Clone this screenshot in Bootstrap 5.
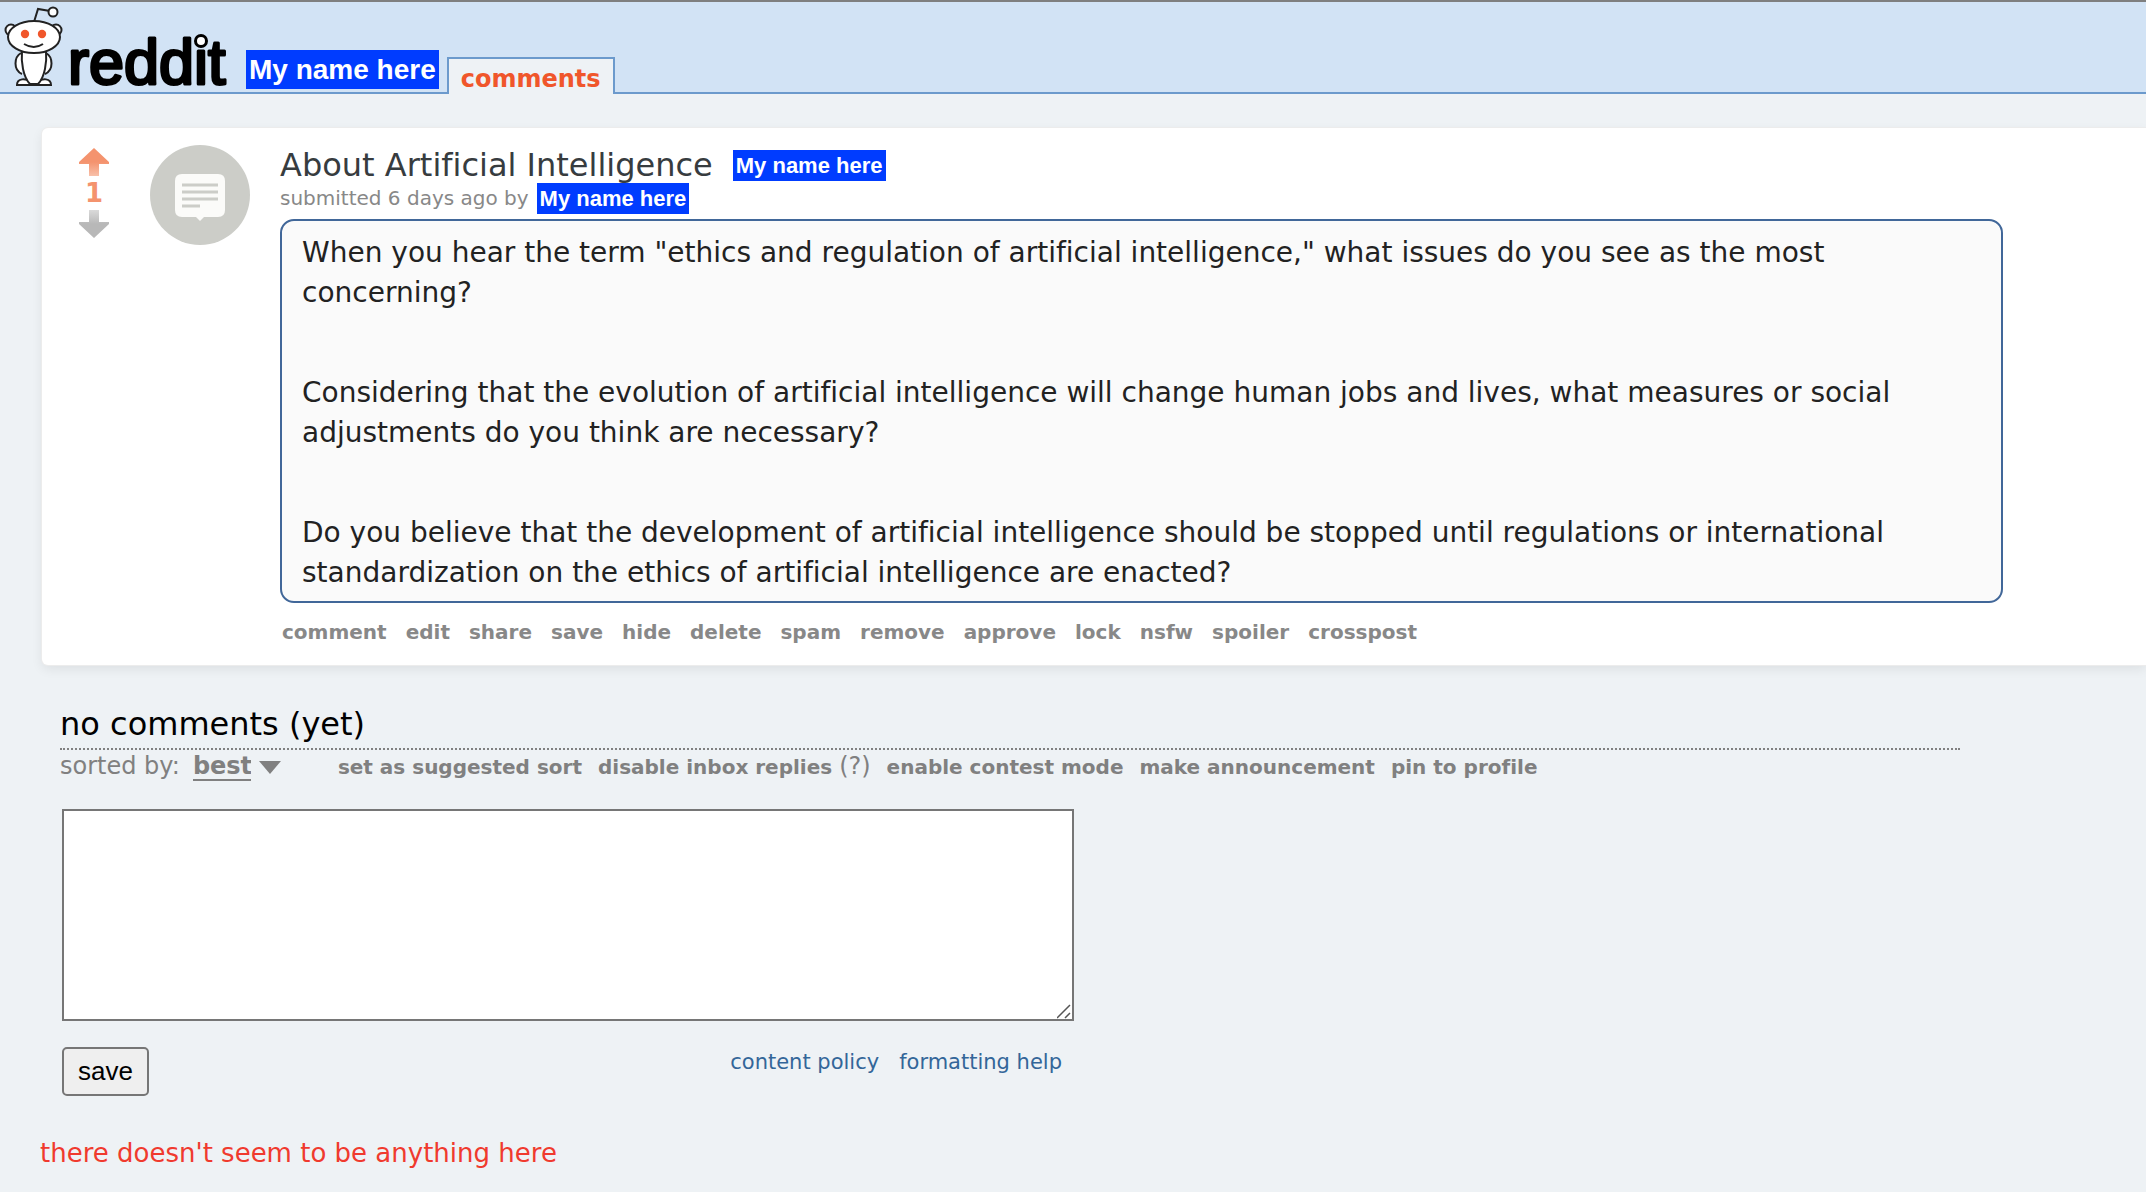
<!DOCTYPE html>
<html lang="en">
<head>
<meta charset="utf-8">
<meta name="viewport" content="width=device-width, initial-scale=1">
<title>About Artificial Intelligence</title>
<link href="https://cdn.jsdelivr.net/npm/bootstrap@5.3.0/dist/css/bootstrap.min.css" rel="stylesheet">
<style>
body{background:#eef2f5;font-family:Verdana,"DejaVu Sans",sans-serif;font-variant-ligatures:none;color:#000;overflow-x:hidden}
a{text-decoration:none}
.site-head{background:#d2e3f5;border-top:2px solid #7f7f7f;border-bottom:2px solid #6c9acc;height:94px;padding-left:4px}
.snoo{width:60px;height:84px}
.wordmark{width:166px;height:90px;margin-bottom:-10px}
.wordmark text{font:63px "Liberation Sans",sans-serif;stroke:#000;stroke-width:3px;stroke-linejoin:round}
.name-tag{background:#003cff;color:#fff;font:bold 22px/31px "Liberation Sans",Arial,sans-serif;padding:0 3px}
.name-lg{font-size:28px;line-height:39px;margin:0 8px 3px 16px}
.tab-on{background:#eef2f5;border:2px solid #6c9acc;border-bottom:0;margin-bottom:-2px;height:37px;padding:0 12px;font-weight:700;font-size:24px;line-height:40px;color:#f0562b}
.post-card{background:#fff;border-radius:6px 0 0 6px;box-shadow:0 0 0 1px #ececec,0 4px 12px rgba(0,0,0,.08);margin:34px 0 0 42px;padding:17px 143px 19px 36px}
.votes{width:32px;margin-right:40px;padding-top:3px}
.votes svg{width:32px;height:28px}
.votes button{line-height:0}
.score{font-weight:700;font-size:26px;line-height:34px;color:#f4936e}
.thumb{width:100px;height:100px;margin-right:30px}
.post-head{gap:20px;padding-top:2px}
.post-title{font-size:32px;line-height:36px;color:#373c3f}
.tagline{font-size:20px;line-height:30px;color:#888}
.post-body{background:#fafafa;border:2px solid #416799;border-radius:14px;padding:12px 20px 8px;margin:5px 0 15px;font-size:28px;line-height:40px;color:#222}
.post-body p{margin-bottom:60px}
.flat{font-size:20px;line-height:28px;font-weight:700;column-gap:16px}
.flat a{color:#888}
.post-links{column-gap:19px;padding-left:2px}
.sort-row .flat a{color:#808080}
.thread{margin:39px 186px 0 60px}
.thread-title{font-size:32px;line-height:40px;border-bottom:2px dotted #808080;padding-bottom:4px}
.sort-row{font-size:24px;line-height:30px;color:#808080;padding-top:1px}
.sort-pick{appearance:none;border:0;border-bottom:2px solid #808080;background:none;color:#808080;font-weight:700;font-size:24px;line-height:26px;padding:0;margin:0 8px 0 13px;width:58px}
.caret{width:22px;height:13px;margin-right:57px}
.reply-form{width:1012px;margin:28px 0 0 2px}
.reply-box{height:212px;border:2px solid #767676;border-radius:0;resize:both;padding:4px}
.reply-box::-webkit-resizer{background:url("data:image/svg+xml,%3Csvg xmlns='http://www.w3.org/2000/svg' viewBox='0 0 15 15'%3E%3Cpath d='M0 14 13 1M8 14l5-5' stroke='%23555' stroke-width='1.5'/%3E%3C/svg%3E") center/100% no-repeat}
.reply-foot{margin-top:26px}
.save-btn{font:26px/30px "Liberation Sans",Arial,sans-serif;background:#efefef;border:2px solid #767676;border-radius:5px;color:#000;padding:7px 14px 8px}
.help-links{font-size:21px;line-height:30px;gap:20px;padding-right:12px}
.help-links a{color:#336699}
.empty-note{color:#f03a2e;font-size:26px;line-height:36px;margin:39px 0 0 40px}
</style>
</head>
<body>
<header class="site-head d-flex align-items-end">
  <a href="#" class="d-flex align-items-end" aria-label="reddit">
    <svg class="snoo" viewBox="4 8 60 84" overflow="visible" fill="#fff" stroke="#222" stroke-width="2">
      <path d="M34 22 38 9 50 11" fill="none"/><circle cx="53" cy="12" r="4.5"/>
      <circle cx="11" cy="30" r="5.5"/><circle cx="56" cy="30" r="5.5"/>
      <path d="M21 53c-7 4-8 17 1 21M46 53c7 4 8 17-1 21"/>
      <path d="M17 85c0-7 9-7 13-3h8c4-4 13-4 13 3z"/>
      <path d="M22 50c-1 12 1 27 8 34h8c7-7 9-22 8-34z"/>
      <ellipse cx="34" cy="37" rx="26" ry="16"/>
      <circle cx="25" cy="34" r="4.200" fill="#f0562b" stroke="none"/><circle cx="42" cy="34" r="4.200" fill="#f0562b" stroke="none"/>
      <path d="M24 44q10 6 19 0" fill="none"/>
    </svg>
    <svg class="wordmark" viewBox="64 12 166 90" overflow="visible"><text x="68" y="84">reddit</text><circle cx="201" cy="41" r="5.500" fill="#fff" stroke="#000" stroke-width="3"/></svg>
  </a>
  <span class="name-tag name-lg">My name here</span>
  <a href="#" class="tab-on">comments</a>
</header>
<main>
  <article class="post-card d-flex align-items-start">
    <div class="votes d-flex flex-column align-items-center">
      <button class="btn p-0 border-0" aria-label="upvote"><svg viewBox="0 0 32 28"><defs><linearGradient id="up" x1="0" y1="0" x2="0" y2="1"><stop offset=".5" stop-color="#f4936e"/><stop offset="1" stop-color="#f8c0a9"/></linearGradient></defs><path d="M16 0 31 14v2H21v12H11V16H1v-2z" fill="url(#up)"/></svg></button>
      <span class="score">1</span>
      <button class="btn p-0 border-0" aria-label="downvote"><svg viewBox="0 0 32 28"><defs><linearGradient id="down" x1="0" y1="0" x2="0" y2="1"><stop offset="0" stop-color="#dadada"/><stop offset=".5" stop-color="#b8b8b8"/></linearGradient></defs><path d="M16 28 31 14v-2H21V0H11v12H1v2z" fill="url(#down)"/></svg></button>
    </div>
    <svg class="thumb flex-shrink-0" viewBox="0 0 100 100"><circle cx="50" cy="50" r="50" fill="#cccdc8"/><path d="M32 29h36q7 0 7 7v29q0 7-7 7H54l-4 4-4-4H32q-7 0-7-7V36q0-7 7-7z" fill="#fbfbf9"/><path d="M32 40h36M32 47h36M32 54h36M32 61h18" stroke="#cccdc8" stroke-width="3"/></svg>
    <div class="flex-grow-1">
      <div class="post-head d-flex align-items-center">
        <h1 class="post-title m-0">About Artificial Intelligence</h1>
        <span class="name-tag">My name here</span>
      </div>
      <div class="tagline d-flex"><span>submitted 6 days ago by</span><span class="name-tag ms-2">My name here</span></div>
      <div class="post-body">
        <p>When you hear the term "ethics and regulation of artificial intelligence," what issues do you see as the most concerning?</p>
        <p>Considering that the evolution of artificial intelligence will change human jobs and lives, what measures or social adjustments do you think are necessary?</p>
        <p class="mb-0">Do you believe that the development of artificial intelligence should be stopped until regulations or international standardization on the ethics of artificial intelligence are enacted?</p>
      </div>
      <nav class="flat post-links d-flex flex-wrap">
        <a href="#">comment</a><a href="#">edit</a><a href="#">share</a><a href="#">save</a><a href="#">hide</a><a href="#">delete</a><a href="#">spam</a><a href="#">remove</a><a href="#">approve</a><a href="#">lock</a><a href="#">nsfw</a><a href="#">spoiler</a><a href="#">crosspost</a>
      </nav>
    </div>
  </article>
  <section class="thread">
    <h2 class="thread-title m-0">no comments (yet)</h2>
    <div class="sort-row d-flex align-items-baseline">
      <label for="sort">sorted by:</label>
      <select id="sort" class="sort-pick"><option>best</option></select>
      <svg class="caret" viewBox="0 0 22 13"><path d="M0 0h22L11 13z" fill="#808080"/></svg>
      <nav class="flat d-flex align-items-baseline flex-wrap">
        <a href="#">set as suggested sort</a>
        <span><a href="#">disable inbox replies</a> <a href="#" class="fs-4 fw-normal">(?)</a></span>
        <a href="#">enable contest mode</a><a href="#">make announcement</a><a href="#">pin to profile</a>
      </nav>
    </div>
    <form class="reply-form">
      <textarea class="form-control reply-box" aria-label="Comment"></textarea>
      <div class="reply-foot d-flex justify-content-between align-items-start">
        <button type="button" class="save-btn">save</button>
        <div class="help-links d-flex"><a href="#">content policy</a><a href="#">formatting help</a></div>
      </div>
    </form>
  </section>
  <p class="empty-note">there doesn't seem to be anything here</p>
</main>
<script src="https://cdn.jsdelivr.net/npm/bootstrap@5.3.0/dist/js/bootstrap.bundle.min.js"></script>
</body>
</html>
